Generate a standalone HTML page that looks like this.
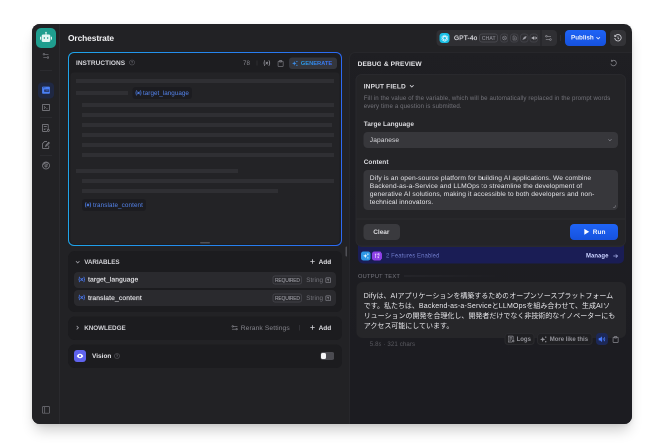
<!DOCTYPE html>
<html lang="en">
<head>
<meta charset="utf-8">
<title>Orchestrate</title>
<style>
*{box-sizing:border-box;margin:0;padding:0}
html,body{width:664px;height:448px;overflow:hidden;background:#fff}
body{font-family:"Liberation Sans","Noto Sans CJK JP",sans-serif;color:#e6e6ea;position:relative;-webkit-font-smoothing:antialiased}
.abs{position:absolute}
.t{position:absolute;white-space:nowrap;line-height:1}
svg{position:absolute;overflow:visible}
#win{will-change:transform;position:absolute;left:32px;top:24px;width:600px;height:400px;background:#222225;border-radius:8px;overflow:hidden;box-shadow:0 9px 14px -3px rgba(0,0,0,.2),0 1px 4px rgba(0,0,0,.09)}
/* everything inside #win positioned relative to page coords via wrapper shift */
#shift{position:absolute;left:-32px;top:-24px;width:664px;height:448px}
#in{position:absolute;left:0;top:0;width:664px;height:448px;zoom:2;transform:scale(.5);transform-origin:0 0;will-change:transform}
.l{letter-spacing:.2px}.j{letter-spacing:-.01px}.bar{position:absolute;height:4px;background:#2f2f33}
.tag{position:absolute;height:12px;border-radius:3px;background:#1c1c20;color:#4f7fe8;font-size:6.35px;line-height:12px;white-space:nowrap}
.panel{position:absolute;left:68.5px;width:273.5px;background:#1c1c1f;border-radius:6px}
.row{position:absolute;left:74px;width:262px;height:16px;background:#2a2a2e;border-radius:4px}
.req{position:absolute;left:272.3px;width:29.8px;height:8.6px;border:1px solid #414147;border-radius:2.5px}.reqt{font-size:5px;color:#acacb4;left:275px;letter-spacing:-.2px}
</style>
</head>
<body>
<div id="win"><div id="shift"><div id="in">

<!-- sidebar -->
<div class="abs" id="side" style="left:32px;top:24px;width:28px;height:400px;background:#222225;border-right:1px solid #2a2a2e"></div>
<div class="abs" id="appicon" style="left:36px;top:28px;width:20px;height:20px;border-radius:5px;background:#1f9e8f"></div>
<svg style="left:40px;top:31px" width="12" height="14" viewBox="0 0 12 14"><g fill="#e3f6f3"><rect x="5.45" y="1.2" width="1.1" height="2.6"/><circle cx="6" cy="1.5" r=".8"/><rect x="1.7" y="3.5" width="8.6" height="7.5" rx="1.5"/><rect x="0" y="5.6" width="1.1" height="3.2" rx=".55"/><rect x="10.9" y="5.6" width="1.1" height="3.2" rx=".55"/></g><g fill="#1f9e8f"><rect x="3.7" y="6.2" width="1.3" height="1.5" rx=".3"/><rect x="7" y="6.2" width="1.3" height="1.5" rx=".3"/></g></svg>
<!-- sliders icon -->
<svg style="left:42.6px;top:53.2px" width="6.8" height="5.8" viewBox="0 0 7 6" fill="none" stroke="#808087" stroke-width=".65"><path d="M2.5 1.3H6.2M0.8 4.7H4.5"/><circle cx="1.4" cy="1.3" r=".85"/><circle cx="5.6" cy="4.7" r=".85"/></svg>
<div class="abs" style="left:40px;top:70px;width:12px;height:1px;background:#2b2b2f"></div>
<div class="abs" style="left:38px;top:82.5px;width:16px;height:16px;border-radius:4px;background:#1f2843"></div>
<svg style="left:42px;top:86.7px" width="8" height="7.3" viewBox="0 0 8 7.3"><rect x=".1" y=".1" width="7.8" height="7.1" rx=".8" fill="#4b80f5"/><rect x="1" y=".9" width=".8" height=".8" fill="#243c78"/><rect x="2.5" y=".9" width=".8" height=".8" fill="#243c78"/><rect x="2.2" y="3" width="5" height="2.3" fill="#22315c"/><rect x="3.6" y="3.7" width="3" height=".7" fill="#3a5fc0"/></svg>
<svg style="left:42px;top:104px" width="8" height="7" viewBox="0 0 8 7" fill="none" stroke="#8a8a91" stroke-width=".7"><rect x=".4" y=".4" width="7.2" height="6.2" rx=".7"/><path d="M2 2.4 3.3 3.5 2 4.6M4.2 4.8H5.6"/></svg>
<div class="abs" style="left:40px;top:117px;width:12px;height:1px;background:#2b2b2f"></div>
<svg style="left:42px;top:124px" width="8" height="8" viewBox="0 0 8 8" fill="none" stroke="#8a8a91" stroke-width=".7"><path d="M6.2 5V.9Q6.2 .4 5.7 .4H1Q.5 .4 .5 .9V7Q.5 7.5 1 7.5H5"/><path d="M1.8 2.4H4.8M1.8 3.9H4.8M1.8 5.4H3.4"/><circle cx="6.3" cy="6.4" r="1"/></svg>
<svg style="left:42px;top:141px" width="8" height="8" viewBox="0 0 8 8" fill="none" stroke="#8a8a91" stroke-width=".7"><path d="M6.8 4.6V7Q6.8 7.5 6.3 7.5H1Q.5 7.5 .5 7V2.6L2.6 .5H5"/><path d="M3.6 5.3 4 4 6.7 1.3 7.4 2 4.7 4.8Z"/></svg>
<div class="abs" style="left:40px;top:155px;width:12px;height:1px;background:#2b2b2f"></div>
<svg style="left:42px;top:161.5px" width="8" height="8" viewBox="0 0 8 8" fill="none" stroke="#8a8a91" stroke-width=".7"><circle cx="4" cy="4" r="3.5"/><circle cx="4" cy="4.4" r="1.1"/><path d="M4.6 3.5 6 2.1M1.6 3.6A2.6 2.6 0 0 1 4.8 1.5"/></svg>
<svg style="left:42px;top:406px" width="8" height="8" viewBox="0 0 8 8" fill="none" stroke="#77777e" stroke-width=".7"><rect x=".4" y=".6" width="7.2" height="6.6" rx=".7"/><path d="M2.7 .6V7.2"/></svg>

<!-- header -->
<div class="t" id="title" style="left:68px;top:34.4px;font-size:8.4px;font-weight:700;color:#f2f2f4;letter-spacing:-.1px">Orchestrate</div>

<!-- model selector -->
<div class="abs" id="model" style="left:436.5px;top:30px;width:120.5px;height:16px;border-radius:4px;background:#2f2f33"></div>
<div class="abs" style="left:439.5px;top:33px;width:10px;height:10px;border-radius:3px;background:#19c0e6"></div>
<svg style="left:440.8px;top:34.3px" width="7.4" height="7.4" viewBox="0 0 7 7" fill="none" stroke="#e6faff" stroke-width=".55"><ellipse cx="3.5" cy="3.5" rx="1.5" ry="3"/><ellipse cx="3.5" cy="3.5" rx="1.5" ry="3" transform="rotate(60 3.5 3.5)"/><ellipse cx="3.5" cy="3.5" rx="1.5" ry="3" transform="rotate(120 3.5 3.5)"/></svg>
<div class="t" id="gpt" style="left:454px;top:34.6px;font-size:6.5px;font-weight:400;color:#d6d6db;letter-spacing:.18px;-webkit-text-stroke:.22px #d6d6db">GPT-4o</div>
<div class="abs" id="chat" style="left:479.2px;top:33.6px;width:19px;height:8.8px;border:1px solid #48484e;border-radius:3px"></div><div class="t" id="chatt" style="left:481.9px;top:35.8px;font-size:5px;color:#8d8d95;letter-spacing:.12px;-webkit-text-stroke:.12px #8d8d95">CHAT</div>
<div class="abs" style="left:500px;top:33.5px;width:8.5px;height:8.9px;border:1px solid #414147;border-radius:3.2px"></div>
<div class="abs" style="left:510px;top:33.5px;width:8.5px;height:8.9px;border:1px solid #414147;border-radius:3.2px"></div>
<div class="abs" style="left:520px;top:33.5px;width:8.5px;height:8.9px;border:1px solid #414147;border-radius:3.2px"></div>
<div class="abs" style="left:529.7px;top:33.5px;width:8.5px;height:8.9px;border:1px solid #414147;border-radius:3.2px"></div>
<svg style="left:502px;top:35.5px" width="5" height="5" viewBox="0 0 5 5" fill="none" stroke="#8b8b93" stroke-width=".5"><circle cx="2.5" cy="2.5" r="2"/><path d="M.8 1.6C2 2.6 3 2.4 4.3 3.4M1.6 4.2C2 3 3 2 4 1"/></svg>
<svg style="left:512px;top:35.5px" width="5" height="5" viewBox="0 0 5 5" fill="none" stroke="#8b8b93" stroke-width=".5"><path d="M1 .5H3.2L4.2 1.5V4.5H1Z"/><path d="M1.8 2.4H3.4M1.8 3.4H3.4"/></svg>
<svg style="left:521.8px;top:35.5px" width="5" height="5" viewBox="0 0 5 5" fill="#9a9aa2"><path d="M.6 4.4C1 2 2.4 .8 4.5 .6 4.4 2.6 3.2 3.8 1.4 3.9L.9 4.6Z"/></svg>
<svg style="left:531.4px;top:35.5px" width="5.4" height="5" viewBox="0 0 5.4 5" fill="#b4b4ba"><path d="M.2 1.7H1.2L2.5 .6V4.4L1.2 3.3H.2Z"/><rect x="3.1" y=".9" width=".8" height="3.2"/><rect x="4.4" y="1.5" width=".8" height="2"/></svg>
<div class="abs" style="left:540.4px;top:30px;width:1px;height:16px;background:#222225"></div>
<svg style="left:545.2px;top:35.2px" width="6.8" height="5.8" viewBox="0 0 7 6" fill="none" stroke="#9a9aa1" stroke-width=".65"><path d="M2.5 1.3H6.2M0.8 4.7H4.5"/><circle cx="1.4" cy="1.3" r=".85"/><circle cx="5.6" cy="4.7" r=".85"/></svg>
<div class="abs" style="left:560.2px;top:35px;width:1px;height:6px;background:#2e2e32"></div>
<div class="abs" id="publish" style="left:565px;top:30px;width:41px;height:16px;border-radius:4px;background:linear-gradient(180deg,#1f64f6,#1652de)"></div>
<div class="t" id="pubt" style="left:571px;top:34.4px;font-size:6.3px;font-weight:700;color:#eef3ff">Publish</div>
<svg style="left:595.8px;top:36.6px" width="4.4" height="3.3" viewBox="0 0 4 3" fill="none" stroke="#e6edff" stroke-width=".8"><path d="M.4 .6 2 2.2 3.6 .6"/></svg>
<div class="abs" id="hist" style="left:610px;top:30px;width:16px;height:16px;border-radius:4px;background:#333337"></div>
<svg style="left:614px;top:34px" width="8" height="8" viewBox="0 0 8 8" fill="none" stroke="#d4d4da" stroke-width=".8"><path d="M1.2 2.2A3.2 3.2 0 1 1 .8 4"/><path d="M.7 .9V2.5H2.3" stroke-width=".7"/><path d="M4 2.4V4.2L5.1 4.9" stroke-width=".7"/></svg>

<!-- instructions box -->
<div class="abs" id="instr" style="left:68px;top:52px;width:274px;height:194px;border-radius:6px;background:linear-gradient(90deg,#1fa5ea,#2c6af3);"></div>
<div class="abs" style="left:69px;top:53px;width:272px;height:192px;border-radius:5px;background:#1d1d20"></div>
<div class="abs" id="editor" style="left:70.3px;top:72.7px;width:269.4px;height:171.3px;border-radius:3px 3px 4px 4px;background:#232326"></div>
<div class="t" id="instrt" style="left:76px;top:59.4px;font-size:6.5px;font-weight:700;color:#d8d8dd;letter-spacing:.03px">INSTRUCTIONS</div>
<svg style="left:129px;top:59.5px" width="6" height="6" viewBox="0 0 6 6" fill="none" stroke="#5e5e65" stroke-width=".55"><circle cx="3" cy="3" r="2.5"/><path d="M2.2 2.4A.8.8 0 1 1 3 3.2V3.7M3 4.4V4.6"/></svg>
<div class="t" style="left:243px;top:60.1px;font-size:6.2px;color:#8a8a91">78</div>
<div class="abs" style="left:256.3px;top:60.3px;width:1px;height:5.4px;background:#2d2d31"></div>
<svg style="left:262.8px;top:60px" width="7.6" height="6.1" viewBox="0 0 8 6.4" fill="none" stroke="#9a9aa2" stroke-width=".75"><path d="M2.1 .6Q1.3 .6 1.3 1.4V2.4Q1.3 3.2 .5 3.2Q1.3 3.2 1.3 4V5Q1.3 5.8 2.1 5.8M5.9 .6Q6.7 .6 6.7 1.4V2.4Q6.7 3.2 7.5 3.2Q6.7 3.2 6.7 4V5Q6.7 5.8 5.9 5.8"/><path d="M2.9 1.9 5.1 4.6M5.2 1.9 2.8 4.6" stroke-width=".8"/></svg>
<svg style="left:277.6px;top:59.8px" width="6.2" height="7" viewBox="0 0 7 8" fill="none" stroke="#85858c" stroke-width=".7"><rect x=".6" y="1.4" width="5.8" height="6" rx=".7"/><rect x="2.2" y=".5" width="2.6" height="1.8" rx=".4" fill="#55555b"/></svg>
<div class="abs" id="gen" style="left:289px;top:57.5px;width:48px;height:11.3px;border-radius:3px;background:#34363d"></div>
<svg style="left:292px;top:60.4px" width="6" height="6" viewBox="0 0 6 6" fill="#3c8de6"><path d="M2.3 .6 2.9 2.3 4.6 2.9 2.9 3.5 2.3 5.2 1.7 3.5 0 2.9 1.7 2.3Z"/><circle cx="4.9" cy="1" r=".65"/><circle cx="4.9" cy="4.9" r=".65"/></svg>
<div class="t" id="gent" style="left:300.8px;top:59.9px;font-size:5.8px;font-weight:700;color:#3f8fe9;letter-spacing:-.05px;background:linear-gradient(90deg,#2b9fe8,#3d6ff5);-webkit-background-clip:text;background-clip:text;-webkit-text-fill-color:transparent">GENERATE</div>

<div class="bar" style="left:76px;top:79px;width:258px"></div>
<div class="bar" style="left:76px;top:91px;width:52px"></div>
<div class="tag" style="left:132.6px;top:87px;width:59.4px"></div><svg style="left:134.8px;top:90.2px" width="7" height="5.8" viewBox="0 0 8 6.4" fill="none" stroke="#4f7fe8" stroke-width=".75"><path d="M2.1 .6Q1.3 .6 1.3 1.4V2.4Q1.3 3.2 .5 3.2Q1.3 3.2 1.3 4V5Q1.3 5.8 2.1 5.8M5.9 .6Q6.7 .6 6.7 1.4V2.4Q6.7 3.2 7.5 3.2Q6.7 3.2 6.7 4V5Q6.7 5.8 5.9 5.8"/><path d="M2.8 1.8 5.2 4.7M5.3 1.8 2.7 4.7" stroke-width="1"/></svg><div class="t" id="tag1" style="left:143px;top:89.9px;font-size:6.3px;color:#5585ee;letter-spacing:.03px">target_language</div>
<div class="bar" style="left:82px;top:103px;width:252px"></div>
<div class="bar" style="left:82px;top:113px;width:252px"></div>
<div class="bar" style="left:82px;top:123px;width:250px"></div>
<div class="bar" style="left:82px;top:133px;width:252px"></div>
<div class="bar" style="left:82px;top:143px;width:250px"></div>
<div class="bar" style="left:82px;top:153px;width:252px"></div>
<div class="bar" style="left:76px;top:169px;width:162px"></div>
<div class="bar" style="left:82px;top:179px;width:252px"></div>
<div class="bar" style="left:82px;top:189px;width:196px"></div>
<div class="tag" style="left:82px;top:199px;width:64px"></div><svg style="left:84.3px;top:202.2px" width="7" height="5.8" viewBox="0 0 8 6.4" fill="none" stroke="#4f7fe8" stroke-width=".75"><path d="M2.1 .6Q1.3 .6 1.3 1.4V2.4Q1.3 3.2 .5 3.2Q1.3 3.2 1.3 4V5Q1.3 5.8 2.1 5.8M5.9 .6Q6.7 .6 6.7 1.4V2.4Q6.7 3.2 7.5 3.2Q6.7 3.2 6.7 4V5Q6.7 5.8 5.9 5.8"/><path d="M2.8 1.8 5.2 4.7M5.3 1.8 2.7 4.7" stroke-width="1"/></svg><div class="t" id="tag2" style="left:93px;top:201.9px;font-size:6.3px;color:#5585ee;letter-spacing:.1px">translate_content</div>
<div class="abs" style="left:200px;top:241.8px;width:10px;height:1.8px;border-radius:1px;background:#505056"></div>
<div class="abs" style="left:345.4px;top:246.6px;width:2px;height:9.8px;border-radius:1px;background:#505056"></div>

<!-- variables -->
<div class="panel" id="vars" style="top:250.9px;height:61.1px"></div>
<svg style="left:75.4px;top:260.3px" width="4.4" height="3.3" viewBox="0 0 4 3" fill="none" stroke="#a2a2a9" stroke-width=".7"><path d="M.4 .6 2 2.2 3.6 .6"/></svg>
<div class="t" id="varst" style="left:84.2px;top:259px;font-size:6.3px;font-weight:700;color:#d4d4d9;letter-spacing:-.07px">VARIABLES</div>
<svg style="left:310px;top:259.2px" width="5" height="5" viewBox="0 0 5 5" stroke="#d4d4d9" stroke-width=".8"><path d="M2.5 .3V4.7M.3 2.5H4.7"/></svg>
<div class="t" id="add1" style="left:318.6px;top:258.6px;font-size:6.5px;font-weight:700;color:#e2e2e6">Add</div>
<div class="row" style="top:272px"></div>
<div class="row" style="top:290px"></div>
<svg style="left:77.8px;top:276.4px" width="7.4" height="5.9" viewBox="0 0 8 6.4" fill="none" stroke="#4876ea" stroke-width=".85"><path d="M2.1 .6Q1.3 .6 1.3 1.4V2.4Q1.3 3.2 .5 3.2Q1.3 3.2 1.3 4V5Q1.3 5.8 2.1 5.8M5.9 .6Q6.7 .6 6.7 1.4V2.4Q6.7 3.2 7.5 3.2Q6.7 3.2 6.7 4V5Q6.7 5.8 5.9 5.8"/><path d="M2.8 1.8 5.2 4.7M5.3 1.8 2.7 4.7" stroke-width="1"/></svg>
<div class="t" id="v1" style="left:88px;top:276.2px;font-size:6.7px;color:#e4e4e8;letter-spacing:.13px;-webkit-text-stroke:.18px #e4e4e8">target_language</div>
<svg style="left:77.8px;top:294.4px" width="7.4" height="5.9" viewBox="0 0 8 6.4" fill="none" stroke="#4876ea" stroke-width=".85"><path d="M2.1 .6Q1.3 .6 1.3 1.4V2.4Q1.3 3.2 .5 3.2Q1.3 3.2 1.3 4V5Q1.3 5.8 2.1 5.8M5.9 .6Q6.7 .6 6.7 1.4V2.4Q6.7 3.2 7.5 3.2Q6.7 3.2 6.7 4V5Q6.7 5.8 5.9 5.8"/><path d="M2.8 1.8 5.2 4.7M5.3 1.8 2.7 4.7" stroke-width="1"/></svg>
<div class="t" id="v2" style="left:88px;top:294.4px;font-size:6.7px;color:#e4e4e8;letter-spacing:.15px;-webkit-text-stroke:.18px #e4e4e8">translate_content</div>
<div class="req" style="top:275.7px"></div><div class="t reqt" style="top:278px">REQUIRED</div>
<div class="req" style="top:293.7px"></div><div class="t reqt" style="top:296px">REQUIRED</div>
<div class="t" id="s1" style="left:306.2px;top:277px;font-size:6.3px;color:#75757c;letter-spacing:.08px">String</div>
<div class="t" style="left:306.2px;top:295px;font-size:6.3px;color:#75757c;letter-spacing:.08px">String</div>
<svg style="left:325.6px;top:277.4px" width="5.4" height="5.4" viewBox="0 0 5.4 5.4" fill="none" stroke="#85858d" stroke-width=".7"><rect x=".35" y=".35" width="4.7" height="4.7" rx=".6"/><path d="M1.5 1.8H3.9M2.7 1.8V4"/></svg>
<svg style="left:325.6px;top:295.4px" width="5.4" height="5.4" viewBox="0 0 5.4 5.4" fill="none" stroke="#85858d" stroke-width=".7"><rect x=".35" y=".35" width="4.7" height="4.7" rx=".6"/><path d="M1.5 1.8H3.9M2.7 1.8V4"/></svg>

<!-- knowledge -->
<div class="panel" id="know" style="top:316.7px;height:23.2px"></div>
<svg style="left:76.2px;top:325.4px" width="3.3" height="4.4" viewBox="0 0 3 4" fill="none" stroke="#a2a2a9" stroke-width=".7"><path d="M.6 .4 2.2 2 .6 3.6"/></svg>
<div class="t" id="knowt" style="left:84.2px;top:324.9px;font-size:6.3px;font-weight:700;color:#d4d4d9;letter-spacing:-.02px">KNOWLEDGE</div>
<svg style="left:231.6px;top:324.8px" width="6.4" height="5.6" viewBox="0 0 7 6" fill="none" stroke="#8a8a91" stroke-width=".7"><path d="M2.2 1.5H6.5M0.5 4.5H4.6"/><circle cx="1.3" cy="1.5" r=".8"/><circle cx="5.6" cy="4.5" r=".8"/></svg>
<div class="t" id="rerank" style="left:240.7px;top:324.5px;font-size:6.7px;color:#85858c;letter-spacing:.1px">Rerank Settings</div>
<div class="abs" style="left:299px;top:325px;width:1px;height:5.5px;background:#303035"></div>
<svg style="left:310px;top:325.2px" width="5" height="5" viewBox="0 0 5 5" stroke="#d4d4d9" stroke-width=".8"><path d="M2.5 .3V4.7M.3 2.5H4.7"/></svg>
<div class="t" style="left:318.6px;top:324.6px;font-size:6.5px;font-weight:700;color:#e2e2e6">Add</div>

<!-- vision -->
<div class="panel" id="vis" style="top:344.6px;height:23.4px"></div>
<div class="abs" style="left:74px;top:350px;width:12px;height:12px;border-radius:3px;background:#5f63ee"></div>
<svg style="left:76.6px;top:353.5px" width="7" height="5" viewBox="0 0 7 5"><path d="M.2 2.5C1.2 .8 2.3 .2 3.5 .2S5.8 .8 6.8 2.5C5.8 4.2 4.7 4.8 3.5 4.8S1.2 4.2 .2 2.5Z" fill="#fff"/><circle cx="3.5" cy="2.5" r="1.1" fill="#5f63ee"/></svg>
<div class="t" id="vist" style="left:92px;top:352.7px;font-size:6.5px;font-weight:700;color:#e2e2e6">Vision</div>
<svg style="left:114px;top:353px" width="6" height="6" viewBox="0 0 6 6" fill="none" stroke="#5e5e65" stroke-width=".55"><circle cx="3" cy="3" r="2.5"/><path d="M2.2 2.4A.8.8 0 1 1 3 3.2V3.7M3 4.4V4.6"/></svg>
<div class="abs" style="left:320.4px;top:352px;width:14px;height:8px;border-radius:2.4px;background:#4a4a50"></div>
<div class="abs" style="left:321.2px;top:353px;width:5px;height:6px;border-radius:1.6px;background:#f5f5f7"></div>

<!-- right panel -->
<div class="abs" id="right" style="left:348.8px;top:52px;width:290px;height:380px;border-radius:6px 0 0 0;background:linear-gradient(180deg,#1f1f23,#1c1c21);border:1px solid #27272b"></div>
<div class="t" id="dbg" style="left:357.6px;top:60.3px;font-size:6.6px;font-weight:700;color:#e6e6ea;letter-spacing:.1px">DEBUG &amp; PREVIEW</div>
<svg style="left:610px;top:59.5px" width="7" height="7" viewBox="0 0 7 7" fill="none" stroke="#8a8a91" stroke-width=".7"><path d="M1.6 1.5A2.8 2.8 0 1 1 .8 4.2"/><path d="M1.3 .3V1.8H2.8" stroke-width=".6"/></svg>

<div class="abs" id="feat" style="left:358px;top:240px;width:266px;height:23.7px;border-radius:0 0 5px 5px;background:#1a1d55"></div>
<div class="abs" id="card" style="left:355.4px;top:74px;width:270.6px;height:172.3px;border-radius:6px;background:#242427;border:1px solid #29292d"></div>
<div class="t" id="inf" style="left:363.7px;top:83.2px;font-size:6.6px;font-weight:700;color:#dedee2;letter-spacing:.14px">INPUT FIELD</div>
<svg style="left:409.4px;top:84.6px" width="4.6" height="3.4" viewBox="0 0 4 3" fill="none" stroke="#d4d4da" stroke-width=".75"><path d="M.4 .6 2 2.2 3.6 .6"/></svg>
<div class="t" id="desc1" style="left:363.7px;top:95.2px;font-size:6.1px;color:#74747b;letter-spacing:.12px">Fill in the value of the variable, which will be automatically replaced in the prompt words</div>
<div class="t" id="desc2" style="left:363.7px;top:102.9px;font-size:6.1px;color:#74747b;letter-spacing:.12px">every time a question is submitted.</div>
<div class="t" id="tl" style="left:363.7px;top:120.6px;font-size:6.5px;font-weight:700;color:#dcdce0;letter-spacing:.04px">Targe Language</div>
<div class="abs" id="sel" style="left:363.7px;top:132px;width:254.4px;height:16px;border-radius:4px;background:#37373b"></div>
<div class="t" id="jp" style="left:369.8px;top:136.3px;font-size:6.6px;color:#dcdce0;letter-spacing:.1px">Japanese</div>
<svg style="left:608px;top:138.6px" width="4" height="3" viewBox="0 0 4 3" fill="none" stroke="#8a8a91" stroke-width=".6"><path d="M.4 .6 2 2.2 3.6 .6"/></svg>
<div class="t" id="ct" style="left:363.7px;top:158.7px;font-size:6.5px;font-weight:700;color:#dcdce0;letter-spacing:.04px">Content</div>
<div class="abs" id="ta" style="left:363.7px;top:170px;width:254.4px;height:39.8px;border-radius:4px;background:#37373b"></div>
<div class="t c" id="c1" style="left:369.8px;top:174.3px;font-size:6.7px;color:#e6e6ea;letter-spacing:.115px">Dify is an open-source platform for building AI applications. We combine</div>
<div class="t c" id="c2" style="left:369.8px;top:182.3px;font-size:6.7px;color:#e6e6ea;letter-spacing:.115px">Backend-as-a-Service and LLMOps to streamline the development of</div>
<div class="t c" id="c3" style="left:369.8px;top:190.3px;font-size:6.7px;color:#e6e6ea;letter-spacing:.115px">generative AI solutions, making it accessible to both developers and non-</div>
<div class="t c" id="c4" style="left:369.8px;top:198.3px;font-size:6.7px;color:#e6e6ea;letter-spacing:.115px">technical innovators.</div>
<svg style="left:612.2px;top:203.9px" width="4" height="4" viewBox="0 0 4 4" fill="none" stroke="#77777e" stroke-width=".7"><path d="M3.6 1.2Q3.6 3.6 1.2 3.6"/></svg>
<div class="abs" style="left:356.4px;top:218.3px;width:268.6px;height:1px;background:#2c2c30"></div>
<div class="abs" id="clear" style="left:363.7px;top:224px;width:36.3px;height:16px;border-radius:4px;background:#3a3a3e"></div>
<div class="t" id="cleart" style="left:373.2px;top:228.3px;font-size:6.5px;font-weight:700;color:#dcdce0">Clear</div>
<div class="abs" id="run" style="left:570.2px;top:224px;width:47.9px;height:16px;border-radius:4px;background:linear-gradient(180deg,#1f64f6,#1652de)"></div>
<svg style="left:584.2px;top:228.7px" width="5.4" height="6.6" viewBox="0 0 5 6" fill="#fff"><path d="M.3 .3 4.8 3 .3 5.7Z"/></svg>
<div class="t" id="runt" style="left:592.8px;top:228.3px;font-size:6.5px;font-weight:700;color:#f0f4ff">Run</div>

<!-- features bar -->
<div class="abs" style="left:361px;top:251.4px;width:9.6px;height:9.2px;border-radius:2.4px;background:#2d97e6"></div>
<svg style="left:363px;top:253px" width="6" height="6" viewBox="0 0 6 6" fill="#e8f6ff"><path d="M2.3 .6 2.9 2.3 4.6 2.9 2.9 3.5 2.3 5.2 1.7 3.5 0 2.9 1.7 2.3Z"/><circle cx="4.9" cy="1" r=".6"/><circle cx="4.9" cy="4.9" r=".6"/></svg>
<div class="abs" style="left:372.2px;top:251.4px;width:9.6px;height:9.2px;border-radius:2.4px;background:#8d3fe6"></div>
<svg style="left:374.2px;top:253px" width="6" height="6" viewBox="0 0 6 6" fill="none" stroke="#f1e4ff" stroke-width=".6"><path d="M.8 1H2.4M1.6 1V5M3.4 1.2 5 .6V3M3.6 3.4 5 5M5 3.6 3.6 5"/></svg>
<div class="t" id="fe" style="left:386px;top:252.7px;font-size:6px;color:#6a76c4;letter-spacing:.06px">2 Features Enabled</div>
<div class="t" id="mg" style="left:586px;top:252.6px;font-size:6px;font-weight:700;color:#c9d1ff;letter-spacing:.02px">Manage</div>
<svg style="left:613px;top:253.6px" width="5" height="5" viewBox="0 0 5 5" fill="none" stroke="#aab3ee" stroke-width=".65"><path d="M.3 2.5H4.5M2.8 .7 4.6 2.5 2.8 4.3"/></svg>

<!-- output -->
<div class="t" id="ot" style="left:358px;top:273.5px;font-size:5.7px;color:#7a7a82;letter-spacing:.25px">OUTPUT TEXT</div>
<div class="abs" style="left:404px;top:275.4px;width:100px;height:1px;background:linear-gradient(90deg,#2c2c31,rgba(44,44,49,0))"></div>
<div class="abs" id="out" style="left:356.3px;top:282px;width:269.7px;height:55.8px;border-radius:6px;background:#262629"></div>
<div class="t j" id="j1" style="left:363.7px;top:290.3px;font-size:7px;line-height:10px;color:#ebebef"><span class="l">Dify</span>は、<span class="l">AI</span>アプリケーションを構築するためのオープンソースプラットフォーム</div>
<div class="t j" id="j2" style="left:363.7px;top:300.3px;font-size:7px;line-height:10px;color:#ebebef">です。私たちは、<span class="l">Backend-as-a-Service</span>と<span class="l">LLMOps</span>を組み合わせて、生成<span class="l">AI</span>ソ</div>
<div class="t j" id="j3" style="left:363.7px;top:310.3px;font-size:7px;line-height:10px;color:#ebebef">リューションの開発を合理化し、開発者だけでなく非技術的なイノベーターにも</div>
<div class="t j" id="j4" style="left:363.7px;top:320.3px;font-size:7px;line-height:10px;color:#ebebef">アクセス可能にしています。</div>
<div class="t" id="st" style="left:369.8px;top:340.9px;font-size:6.1px;color:#5a5a61;letter-spacing:.1px">5.8s · 321 chars</div>

<div class="abs" id="logs" style="left:504.7px;top:333.2px;width:29.8px;height:12px;border-radius:3.5px;background:#202023;border:1px solid #2a2a2e"></div>
<svg style="left:508px;top:335.6px" width="6.6" height="7.2" viewBox="0 0 8 8" fill="none" stroke="#94949b" stroke-width=".85"><path d="M6.2 5V.9Q6.2 .4 5.7 .4H1Q.5 .4 .5 .9V7Q.5 7.5 1 7.5H5"/><path d="M1.8 2.4H4.8M1.8 3.9H4.8M1.8 5.4H3.4"/><circle cx="6.3" cy="6.4" r="1"/></svg>
<div class="t" id="logst" style="left:516.6px;top:336.1px;font-size:6px;color:#94949b;font-weight:700">Logs</div>
<div class="abs" id="more" style="left:537px;top:333.2px;width:55.3px;height:12px;border-radius:3.5px;background:#202023;border:1px solid #2a2a2e"></div>
<svg style="left:540.2px;top:335.8px" width="7" height="7" viewBox="0 0 6 6" fill="#94949b"><path d="M2.3 .6 2.9 2.3 4.6 2.9 2.9 3.5 2.3 5.2 1.7 3.5 0 2.9 1.7 2.3Z"/><circle cx="4.9" cy="1" r=".6"/><circle cx="4.9" cy="4.9" r=".6"/></svg>
<div class="t" id="moret" style="left:549.7px;top:336.1px;font-size:6px;color:#94949b;font-weight:700">More like this</div>
<div class="abs" style="left:596.2px;top:333.2px;width:11.8px;height:12px;border-radius:3.5px;background:#1c2857"></div>
<svg style="left:598.4px;top:336px" width="7.4" height="6.4" viewBox="0 0 7.4 6.4" fill="none" stroke="#4a7dff" stroke-width=".7"><path d="M.4 2.2H1.6L3.3 .7V5.7L1.6 4.2H.4Z" fill="#4a7dff" stroke-width=".4"/><path d="M4.5 2.1Q5.2 3.2 4.5 4.3M5.7 1.2Q7 3.2 5.7 5.2"/></svg>
<svg style="left:612.3px;top:335.8px" width="6.2" height="7" viewBox="0 0 7 8" fill="none" stroke="#8b8b92" stroke-width=".8"><rect x=".6" y="1.4" width="5.8" height="6" rx=".7"/><rect x="2.2" y=".5" width="2.6" height="1.8" rx=".4" fill="#55555b"/></svg>

</div></div></div>
</body>
</html>
